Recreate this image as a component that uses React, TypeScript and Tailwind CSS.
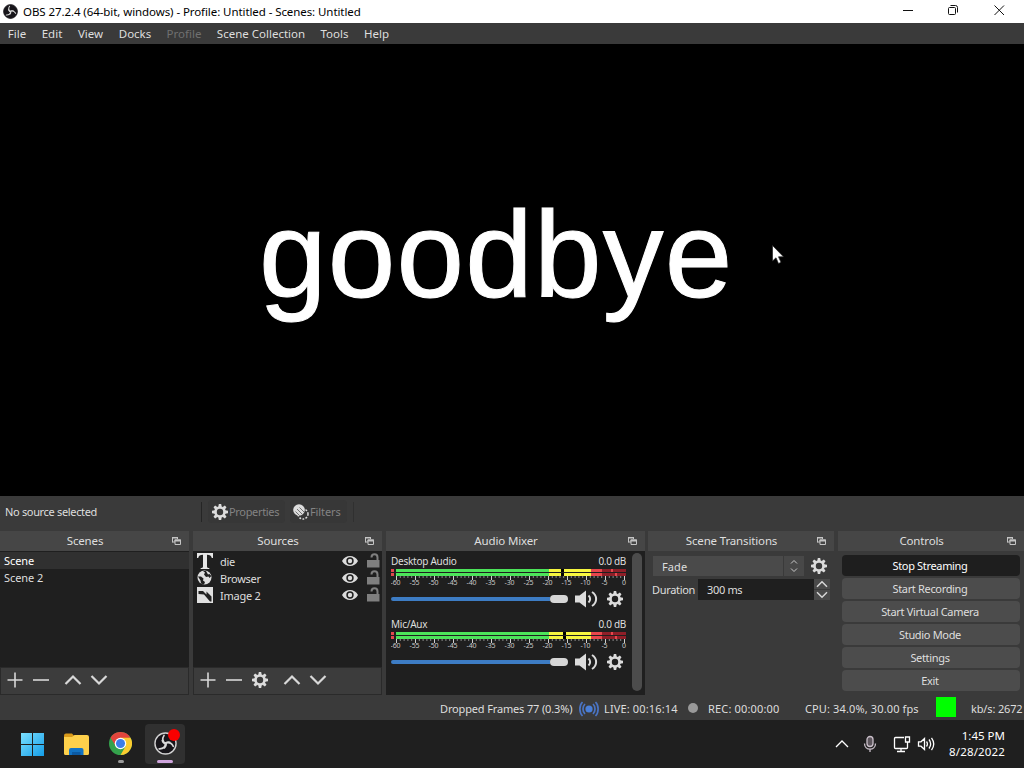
import type { ReactNode } from "react";

const TEETH = [0, 45, 90, 135, 180, 225, 270, 315];

function Gear({ size = 16 }: { size?: number }) {
  return (
    <svg width={size} height={size} viewBox="0 0 16 16" className="shrink-0">
      <circle cx="8" cy="8" r="4.5" fill="none" stroke="#dcdcdc" strokeWidth="2.6" />
      {TEETH.map((a) => (
        <path key={a} d="M6.3 3 L6.8 0 H9.2 L9.7 3 Z" fill="#dcdcdc" transform={`rotate(${a} 8 8)`} />
      ))}
    </svg>
  );
}

function ObsLogo({ size, ring }: { size: number; ring: string }) {
  return (
    <svg width={size} height={size} viewBox="0 0 24 24" className="shrink-0">
      <circle cx="12" cy="12" r="11" fill="#17151a" stroke={ring} strokeWidth="1.5" />
      {[0, 120, 240].map((a) => (
        <g key={a} transform={`rotate(${a} 12 12)`}>
          <path d="M12 12.5 C9 10 8.5 6.5 10.5 3.5" fill="none" stroke="#d9d9d9" strokeWidth="1.7" strokeLinecap="round" />
          <path d="M11.5 12 C12.5 10.6 14.5 10 16.5 10.6" fill="none" stroke="#d9d9d9" strokeWidth="1.5" strokeLinecap="round" />
        </g>
      ))}
    </svg>
  );
}

function PopOut() {
  return (
    <svg width="9" height="8" viewBox="0 0 9 8" className="shrink-0">
      <path d="M.5 5.5V.5H5.5V2M.5 5H3" fill="none" stroke="#c4c4c4" />
      <path d="M0 0h6v1.5H0z" fill="#c4c4c4" />
      <path d="M3 3h5.5v4.5H3z" fill="#464646" stroke="#c4c4c4" />
      <path d="M2.5 2.5H9v2H2.5z" fill="#c4c4c4" />
    </svg>
  );
}

function Chevron({ up, size = 18 }: { up?: boolean; size?: number }) {
  return (
    <svg width={size} height={size} viewBox="0 0 18 18" className="shrink-0">
      <path
        d={up ? "M1.5 13 L9 5.5 L16.5 13" : "M1.5 5 L9 12.5 L16.5 5"}
        fill="none"
        stroke="#d8d8d8"
        strokeWidth="2.2"
      />
    </svg>
  );
}

function Plus() {
  return (
    <svg width="16" height="16" viewBox="0 0 16 16" className="shrink-0">
      <path d="M8 .5v15M.5 8h15" stroke="#d8d8d8" strokeWidth="1.6" />
    </svg>
  );
}

function Minus() {
  return (
    <svg width="16" height="16" viewBox="0 0 16 16" className="shrink-0">
      <path d="M0 8h16" stroke="#d8d8d8" strokeWidth="1.6" />
    </svg>
  );
}

function Eye() {
  return (
    <svg width="16" height="12" viewBox="0 0 16 12" className="shrink-0">
      <path d="M0 6 C3.5 -.8 12.5 -.8 16 6 C12.5 12.8 3.5 12.8 0 6Z" fill="#dcdcdc" />
      <circle cx="8" cy="6" r="3.7" fill="#1f1f1f" />
      <circle cx="8" cy="6" r="2.2" fill="#dcdcdc" />
    </svg>
  );
}

function Unlock() {
  return (
    <svg width="13" height="15" viewBox="0 0 13 15" className="shrink-0">
      <path d="M0 7h12.5v7.5H0z" fill="#7f7f7f" />
      <path d="M4.5 4.5 C4.5 .3 10.5 .3 10.5 4.5 V8" fill="none" stroke="#7f7f7f" strokeWidth="2" />
    </svg>
  );
}

function Speaker() {
  return (
    <svg width="24" height="18" viewBox="0 0 24 18" className="shrink-0">
      <path d="M0 5.5h4.5L11 .5v17L4.5 12.5H0z" fill="#dcdcdc" />
      <path d="M13.5 5.5 C15.7 7.5 15.7 10.5 13.5 12.5M17 2 C22.5 5.5 22.5 12.5 17 16" fill="none" stroke="#dcdcdc" strokeWidth="2" />
    </svg>
  );
}

function DockHeader({ title }: { title: string }) {
  return (
    <div className="flex h-5 shrink-0 items-center bg-[#464646] pr-2 text-[11.5px] tracking-[-0.15px]">
      <span className="flex-1 pr-0.5 text-center">{title}</span>
      <PopOut />
    </div>
  );
}

const menu = [
  { label: "File", w: "w-[34px]" },
  { label: "Edit", w: "w-9" },
  { label: "View", w: "w-[41px]" },
  { label: "Docks", w: "w-12" },
  { label: "Profile", w: "w-[50px]", off: true },
  { label: "Scene Collection", w: "w-[104px]" },
  { label: "Tools", w: "w-[43px]" },
  { label: "Help", w: "w-[41px]" },
];

const ticks = Array.from({ length: 61 }, (_, i) => i);

function Meter({ peak }: { peak: number }) {
  return (
    <svg width="237" height="18" viewBox="0 0 237 18" className="block">
      {[0, 4].map((y) => (
        <g key={y} transform={`translate(0 ${y})`}>
          <rect x="0" width="3" height="3" fill="#e2474f" />
          <rect x="5" width="153" height="3" fill="#4ce45a" />
          <rect x="158" width="42" height="3" fill="#f6f63f" />
          <rect x="200" width="11" height="3" fill="#e8464c" />
          <rect x="211" width="24" height="3" fill="#8f1f28" />
          <rect x={peak} width="3" height="3" fill="#000" />
        </g>
      ))}
      <rect x="220" y="0" width="2" height="3" fill="#e8464c" />
      <rect x="224" y="4" width="2" height="3" fill="#e8464c" />
      {ticks.map((i) => (
        <rect key={i} x={5 + i * 3.8} y="7" width="1" height={i % 5 ? 2 : 4} fill={i % 5 ? "#8a8a8a" : "#cfcfcf"} />
      ))}
      {Array.from({ length: 13 }, (_, i) => (
        <text key={i} x={i === 12 ? 233 : 4.5 + i * 19} y="15.5" textAnchor="middle" fontSize="7" letterSpacing="-.1" fill="#c8c8c8">
          {i === 12 ? "0" : String(i * 5 - 60)}
        </text>
      ))}
    </svg>
  );
}

function Channel({ name, peak }: { name: string; peak: number }) {
  return (
    <div className="h-[63px] pl-[5px]">
      <div className="flex h-4 w-[235px] items-center justify-between pb-px text-[10px]">
        <span className="tracking-[-0.25px]">{name}</span>
        <span className="tracking-[-0.3px]">0.0 dB</span>
      </div>
      <Meter peak={peak} />
      <div className="flex h-6 items-center">
        <div className="h-1 w-[159px] rounded-l-full bg-[#3d7cc4]" />
        <div className="h-2 w-[18px] rounded-sm bg-[#d6d6d6]" />
        <div className="ml-[7px]">
          <Speaker />
        </div>
        <div className="ml-2">
          <Gear />
        </div>
      </div>
    </div>
  );
}

function SourceRow({ icon, name }: { icon: ReactNode; name: string }) {
  return (
    <div className="flex h-[17px] items-center pr-0.5 pl-1">
      <span className="w-[23px]">{icon}</span>
      <span className="flex-1 pt-0.5">{name}</span>
      <Eye />
      <span className="ml-[9px]">
        <Unlock />
      </span>
    </div>
  );
}

const textIcon = (
  <svg width="16" height="16" viewBox="0 0 16 16">
    <path d="M0 0H16V5H14.8C14.2 2.5 13 1.7 10 1.7V13.5C10 14.6 11 15 12.3 15V16H3.7V15C5 15 6 14.6 6 13.5V1.7C3 1.7 1.8 2.5 1.2 5H0Z" fill="#e6e6e6" />
  </svg>
);

const globeIcon = (
  <svg width="16" height="16" viewBox="0 0 16 16">
    <circle cx="7.5" cy="7.5" r="7" fill="#dedede" />
    <path d="M1 6.5L4 6.5 6.500 8.500 6 10.5 8 12 7 14.500 4 13.5 3.5 10.500ZM6 1L8 2.5 7 4.5 9 7 11.500 6.5 12.5 8 14.300 6 12.5 4 11 4.500 9 1Z" fill="#1f1f1f" />
  </svg>
);

const imageIcon = (
  <svg width="16" height="16" viewBox="0 0 16 16">
    <path d="M0 0h16v16H0z" fill="#e0e0e0" />
    <path d="M1.5 4H6L9.500 7.500V4.500L14.5 9.5V14.5L13 14.500 7 7.500 1.5 7Z" fill="#222" />
  </svg>
);

const buttons = ["Stop Streaming", "Start Recording", "Start Virtual Camera", "Studio Mode", "Settings", "Exit"];

export default function App() {
  return (
    <div className="relative flex h-[768px] w-[1024px] flex-col overflow-hidden bg-[#3a3a3a] font-['Noto_Sans',sans-serif] text-[11.5px] leading-4 whitespace-nowrap text-[#dedede]">
      {/* title bar */}
      <header className="flex h-[23px] shrink-0 items-center bg-white pl-[3px] text-black">
        <ObsLogo size={15} ring="#17151a" />
        <span className="ml-[5px] flex-1 tracking-[-0.08px]">OBS 27.2.4 (64-bit, windows) - Profile: Untitled - Scenes: Untitled</span>
        <svg width="121" height="23" viewBox="0 0 121 23" fill="none" stroke="#111">
          <path d="M0 10.5h10M91.5 5.5l9.5 9.5M101 5.5L91.5 15" />
          <rect x="45.5" y="7.5" width="7" height="7" rx="1" />
          <path d="M47.5 5.5h5a2 2 0 0 1 2 2v5" />
        </svg>
      </header>

      <nav className="flex h-[21px] shrink-0 items-center">
        {menu.map((m) => (
          <span key={m.label} className={`${m.w} text-center ${m.off ? "text-[#707070]" : ""}`}>
            {m.label}
          </span>
        ))}
      </nav>

      {/* preview */}
      <main className="h-[452px] shrink-0 bg-black pt-[140px] pl-[259px] font-['Liberation_Sans',sans-serif] text-[121.5px] leading-[142px] tracking-[1.2px] text-white [-webkit-text-stroke:1px_white]">
        goodbye
      </main>
      <svg width="12" height="20" viewBox="0 0 12 20" className="absolute top-[245px] left-[772px]">
        <path d="M.5 .5V16L4 12.8 6.5 18.5 9 17.3 6.5 11.8H11.5Z" fill="#fff" stroke="#222" strokeWidth=".7" />
      </svg>

      {/* source toolbar */}
      <div className="flex h-[35px] shrink-0 items-center pb-1 text-[11px] tracking-[-0.33px] text-[#838383]">
        <span className="w-[201px] pl-[5px] text-[#dedede]">No source selected</span>
        <div className="h-5 w-px bg-[#252525]" />
        <div className="ml-[6px] flex h-[23px] w-[77px] items-center rounded-sm bg-[#373737] pl-1">
          <Gear />
          <span className="ml-px">Properties</span>
        </div>
        <div className="ml-[5px] flex h-[23px] w-[57px] items-center rounded-sm bg-[#373737] pl-[3px]">
          <svg width="16" height="16" viewBox="0 0 16 16" className="shrink-0">
            <circle cx="10" cy="10" r="5" fill="none" stroke="#dcdcdc" strokeWidth="1.5" strokeDasharray="1.8 1.4" />
            <circle cx="6" cy="6" r="5.8" fill="#dcdcdc" />
            <path d="M4 5l5 5M6.5 3.5l5 5M2.5 7.5l4 4" stroke="#555" strokeWidth=".8" />
          </svg>
          <span className="ml-px tracking-[-0.1px]">Filters</span>
        </div>
        <div className="ml-[6px] h-5 w-px bg-[#303030]" />
      </div>

      {/* docks */}
      <div className="flex h-[164px] shrink-0 text-[11px] tracking-[-0.33px]">
        <section className="mr-1 flex w-[189px] flex-col">
          <DockHeader title="Scenes" />
          <div className="flex-1 bg-[#1f1f1f] pt-px tracking-[-0.05px]">
            <div className="h-[17px] bg-[#303030] pt-px pl-1 text-white">Scene</div>
            <div className="h-[17px] pt-px pl-1">Scene 2</div>
          </div>
          <div className="flex h-7 items-center border border-[#2a2a2a] bg-[#3c3c3c] pb-0.5 pl-[6px]">
            <Plus />
            <span className="ml-2.5"><Minus /></span>
            <span className="ml-[15px]"><Chevron up /></span>
            <span className="ml-2"><Chevron /></span>
          </div>
        </section>

        <section className="mr-1 flex w-[189px] flex-col">
          <DockHeader title="Sources" />
          <div className="flex-1 bg-[#1f1f1f] pt-px tracking-[-0.25px]">
            <SourceRow icon={textIcon} name="die" />
            <SourceRow icon={globeIcon} name="Browser" />
            <SourceRow icon={imageIcon} name="Image 2" />
          </div>
          <div className="flex h-7 items-center border border-[#2a2a2a] bg-[#3c3c3c] pb-0.5 pl-[6px]">
            <Plus />
            <span className="ml-2.5"><Minus /></span>
            <span className="ml-2.5"><Gear /></span>
            <span className="ml-[15px]"><Chevron up /></span>
            <span className="ml-2"><Chevron /></span>
          </div>
        </section>

        <section className="mr-[3px] flex w-[259px] flex-col">
          <DockHeader title="Audio Mixer" />
          <div className="flex flex-1 bg-[#1f1f1f]">
            <div className="w-[246px] pt-[2px]">
              <Channel name="Desktop Audio" peak={170} />
              <Channel name="Mic/Aux" peak={172} />
            </div>
            <div className="mt-[2px] h-[138px] w-2.5 rounded-full bg-[#4c4c4c]" />
          </div>
        </section>

        <section className="mr-1 flex w-[186px] flex-col">
          <DockHeader title="Scene Transitions" />
          <div className="mt-[5px] flex h-5 pl-[5px]">
            <div className="flex w-[130px] items-center bg-[#4a4a4a] pt-px pl-[9px] tracking-[0.1px]">Fade</div>
            <div className="ml-px flex w-5 flex-col items-center justify-center bg-[#484848]">
              <svg width="8" height="14" viewBox="0 0 8 14" fill="none" stroke="#c8c8c8">
                <path d="M1 4.5l3-3 3 3M1 9.5l3 3 3-3" />
              </svg>
            </div>
            <div className="ml-[7px] flex items-center">
              <Gear />
            </div>
          </div>
          <div className="mt-[3px] flex h-[21px] items-center pl-1">
            <span className="w-[46px]">Duration</span>
            <div className="flex h-full w-[116px] items-center bg-[#1f1f1f] pl-[9px]">300 ms</div>
            <div className="flex h-full w-4 flex-col justify-between">
              <div className="flex h-2.5 items-center justify-center bg-[#4a4a4a]"><Chevron up size={12} /></div>
              <div className="flex h-2.5 items-center justify-center bg-[#4a4a4a]"><Chevron size={12} /></div>
            </div>
          </div>
        </section>

        <section className="flex w-[186px] flex-col">
          <DockHeader title="Controls" />
          <div className="flex flex-col gap-0.5 pt-1 pr-1 pl-1">
            {buttons.map((b, i) => (
              <div key={b} className={`h-[21px] rounded-sm pr-0.5 text-center leading-[21px] ${i === 0 ? "bg-[#1e1e1e] text-white" : "bg-[#4c4c4c]"}`}>
                {b}
              </div>
            ))}
          </div>
        </section>
      </div>

      {/* status bar */}
      <div className="flex h-[25px] shrink-0 items-center pt-0.5 pl-[440px] text-[11px]">
        <span className="w-[139px] tracking-[-0.15px]">Dropped Frames 77 (0.3%)</span>
        <svg width="20" height="16" viewBox="0 0 20 16" fill="none" stroke="#4a74c4" strokeWidth="1.7" className="shrink-0">
          <circle cx="10" cy="8" r="3.6" fill="#4a7fd8" stroke="none" />
          <path d="M6 3C3.3 5.5 3.3 10.5 6 13M14 3c2.7 2.5 2.7 7.5 0 10M3.5 1C0 4.5 0 11.5 3.5 15M16.5 1c3.5 3.5 3.5 10.5 0 14" />
        </svg>
        <span className="ml-[5px] w-[84px] tracking-[0.14px]">LIVE: 00:16:14</span>
        <div className="-mt-0.5 size-2.5 shrink-0 rounded-full bg-[#999]" />
        <span className="ml-[10px] w-[97px] tracking-[0.16px]">REC: 00:00:00</span>
        <span className="w-[131px] tracking-[0.13px]">CPU: 34.0%, 30.00 fps</span>
        <div className="-mt-[3px] size-5 shrink-0 bg-[#00ff00]" />
        <span className="ml-[15px] tracking-[-0.15px]">kb/s: 2672</span>
      </div>

      {/* taskbar */}
      <footer className="flex h-12 shrink-0 items-center bg-[#1f1f1f] pl-[21px] text-white">
        <svg width="23" height="23" viewBox="0 0 23 23">
          <defs>
            <linearGradient id="win" x1="0" y1="0" x2="1" y2="1">
              <stop stopColor="#7be0ff" />
              <stop offset="1" stopColor="#149de8" />
            </linearGradient>
          </defs>
          <path d="M0 0h11v11H0zM12 0h11v11H12zM0 12h11v11H0zM12 12h11v11H12z" fill="url(#win)" />
        </svg>
        <svg width="25" height="23" viewBox="0 0 25 23" className="ml-[20px]">
          <path d="M0 2.5Q0 .5 2 .5H8L11 4H0z" fill="#d99a1a" />
          <path d="M0 4H8L10.5 2H23Q25 2 25 4V20.5Q25 22 23.5 22H1.5Q0 22 0 20.5Z" fill="#fdd04b" />
          <path d="M5 22V17Q5 15 7 15H17.5Q19.5 15 19.5 17V22Z" fill="#1273c4" />
          <path d="M8 22V19H16.5V22Z" fill="#0c5aa3" />
        </svg>
        <div className="ml-[20px] flex flex-col items-center pt-[7px]">
          <svg width="23" height="23" viewBox="0 0 24 24">
            <circle cx="12" cy="12" r="12" fill="#34a24c" />
            <path d="M1.6 6A12 12 0 0 1 22.4 6L12 6.5 7 14.5Z" fill="#e2453c" />
            <path d="M22.4 6A12 12 0 0 1 12 24L17.2 15 12 6Z" fill="#fbcb2f" />
            <circle cx="12" cy="12" r="6" fill="#fff" />
            <circle cx="12" cy="12" r="4.7" fill="#3d7de8" />
          </svg>
          <div className="mt-[5px] h-[3px] w-[6px] rounded-full bg-[#9a9a9a]" />
        </div>
        <div className="relative ml-[13px] flex h-10 w-10 flex-col items-center rounded-sm bg-[#303030] pt-[8px]">
          <ObsLogo size={23} ring="#d0d0d0" />
          <div className="absolute top-[5px] right-[5px] size-3 rounded-full bg-[#f90000]" />
          <div className="mt-[5px] h-[3px] w-4 rounded-full bg-[#cfa5dd]" />
        </div>

        <svg width="100" height="20" viewBox="0 0 100 20" fill="none" stroke="#fff" strokeWidth="1.3" className="ml-[650px]">
          <path d="M1 13l6-6 6 6" />
          <g stroke="#c9bfc9">
            <rect x="32" y="2.5" width="6" height="10" rx="3" fill="#5d565d" />
            <path d="M29.5 9.5c0 7.5 11 7.5 11 0M35 15v3" />
          </g>
          <path d="M69 3.5H60.5Q59.5 3.5 59.5 4.5V13.5Q59.5 14.5 60.5 14.5H71.5Q72.5 14.5 72.5 13.5V10M66 14.5V17.5M62 17.5h8M70.5 3h4v5h-4zM72.5 8v3" />
          <path d="M83.5 7.8h2.5l3.5-3.3v11l-3.5-3.3h-2.5zM91.5 7.5q1.8 2.5 0 5M94 5.5q3.3 4.5 0 9M96.5 3.8q4.5 6.2 0 12.4" />
        </svg>
        <div className="ml-auto pr-[19px] text-right">
          <div>1:45 PM</div>
          <div className="tracking-[0.15px]">8/28/2022</div>
        </div>
      </footer>
    </div>
  );
}
